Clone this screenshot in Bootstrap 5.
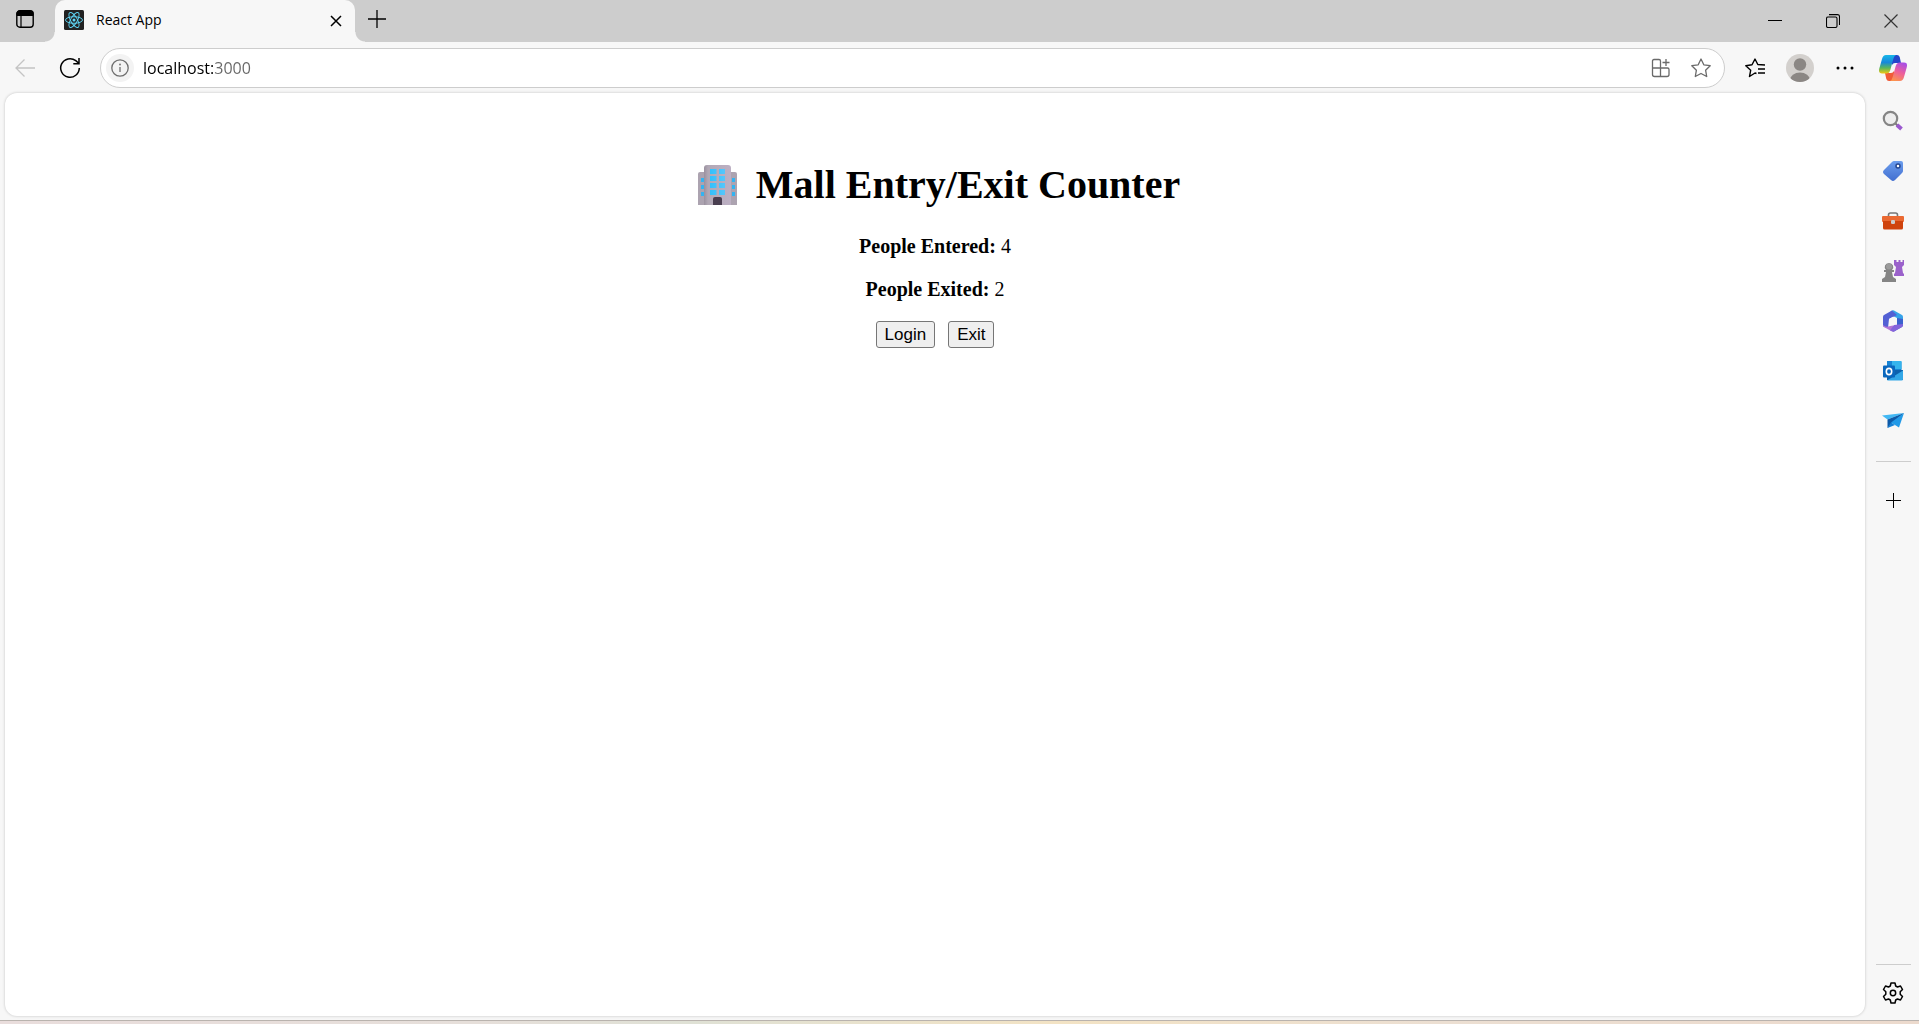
<!DOCTYPE html>
<html lang="en">
<head>
<meta charset="utf-8">
<meta name="viewport" content="width=device-width, initial-scale=1">
<title>React App</title>
<link href="https://cdn.jsdelivr.net/npm/bootstrap@5.3.0/dist/css/bootstrap.min.css" rel="stylesheet">
<style>
  body { background: #f7f7f7; font-family: "Open Sans", "Noto Sans", sans-serif; color: #000; }
  svg { display: block; flex: none; }
  .icon-btn { border: 0; background: none; padding: 0; color: #000; display: flex; align-items: center; justify-content: center; flex: none; }

  .tab-strip { background: #cdcdcd; height: 42px; }
  .tab-actions { width: 50px; }
  .browser-tab { width: 310px; position: relative; padding: 0 5px; }
  .tab-face { background: #f7f7f7; border-radius: 10px 10px 0 0; height: 42px; padding: 0 9px 3px 9px; gap: 12px; font-size: 14px; }
  .browser-tab::before, .browser-tab::after { content: ""; position: absolute; bottom: 0; width: 10px; height: 10px; }
  .browser-tab::before { left: -5px; background: radial-gradient(circle at 0 0, #cdcdcd 9px, #f7f7f7 10px); }
  .browser-tab::after { right: -5px; background: radial-gradient(circle at 100% 0, #cdcdcd 9px, #f7f7f7 10px); }
  .new-tab { width: 34px; }
  .window-btn { width: 58px; height: 42px; padding-left: 2px; }

  .toolbar { height: 51px; gap: 15px; padding: 1px 5px 0 10px; }
  .tool-btn { width: 30px; height: 30px; }
  .address { height: 40px; border: 1px solid #cdcdcd; border-radius: 20px; background: #fff; padding: 0 13px 0 5px; }
  .site-info { width: 28px; height: 28px; border-radius: 50%; background: #f3f3f3; color: #6e6e6e; }
  .address-input { border: 0; outline: 0; padding: 0; margin-left: 9px; min-width: 0; height: 30px; font-size: 16px;
    color: transparent; background: linear-gradient(90deg, #000 71px, #666 71px); -webkit-background-clip: text; background-clip: text; }
  .address-tools { gap: 20px; }
  .address-tools .icon-btn { color: #6a6a6a; width: 20px; }

  .viewport { margin: 0 0 0 5px; background: #fff; border-radius: 12px; box-shadow: 0 0 3px rgba(0,0,0,.22); padding-top: 69px;
    font-family: "Liberation Serif", serif; font-size: 20px; line-height: 23px; }
  .viewport h1 { font-size: 40px; font-weight: 700; line-height: 46px; margin: 0 0 27px; gap: 10px; }
  .viewport p { margin: 0 0 20px; }
  .emoji-box { width: 56px; }
  .counter-btn { font: 17px/23px "Liberation Sans", sans-serif; background: #efefef; border: 1px solid #767676; border-radius: 3px; padding: 1px 8px; color: #000; }
  .counter-row { gap: 13px; }

  .side-rail { width: 54px; padding: 9px 0 10px 2px; }
  .rail-btn { width: 34px; height: 34px; }
  .rail-apps { gap: 16px; }
  .rail-copilot { margin-bottom: 3px; }
  .rail-line { width: 35px; height: 1px; background: #cdcdcd; }
  .rail-line-top { margin: 23px 0 21px; }
  .rail-line-bottom { margin: auto 0 11px; }
  .desk-edge { height: 4px; border-top: 1px solid #b9b3ae; background: linear-gradient(90deg, #e9dddc, #e6dfda 25%, #dfe1d5 36%, #f3e3c4 55%, #ecdfd2 75%, #ecdacd); }
</style>
</head>
<body>
<div class="vh-100 d-flex flex-column overflow-hidden">

  <header class="tab-strip d-flex">
    <button class="icon-btn tab-actions pb-1" aria-label="Tab actions">
      <svg width="18" height="18" viewBox="0 0 18 18" fill="none" stroke="#000"><rect x=".8" y=".8" width="16.4" height="16.4" rx="3" stroke-width="1.4"/><path d="M1 4V3q0-2 2-2h12q2 0 2 2v2.500H1z" fill="#000"/><path d="M5 5v12" stroke-width="1.200"/></svg>
    </button>
    <div class="browser-tab">
      <div class="tab-face d-flex align-items-center">
        <svg width="20" height="20" viewBox="0 0 20 20" fill="none" stroke="#61dafb"><rect width="20" height="20" rx="1.500" fill="#222" stroke="none"/><g stroke-width=".9" transform="translate(10 10)"><ellipse rx="8.500" ry="3.300"/><ellipse rx="8.500" ry="3.300" transform="rotate(60)"/><ellipse rx="8.500" ry="3.300" transform="rotate(120)"/><circle r="1.500" fill="#61dafb" stroke="none"/></g></svg>
        <span class="flex-grow-1">React App</span>
        <button class="icon-btn" aria-label="Close tab"><svg width="20" height="20" viewBox="0 0 20 20" stroke="#000" stroke-width="1.500"><path d="M5 6l10 10M15 6L5 16"/></svg></button>
      </div>
    </div>
    <button class="icon-btn new-tab pb-1" aria-label="New tab"><svg width="18" height="18" viewBox="0 0 18 18" stroke="#000" stroke-width="1.300"><path d="M0 9h18M9 0v18"/></svg></button>
    <div class="d-flex ms-auto">
      <button class="icon-btn window-btn" aria-label="Minimize"><svg width="14" height="14" viewBox="0 0 14 14" stroke="#000"><path d="M0 6.500h14"/></svg></button>
      <button class="icon-btn window-btn" aria-label="Restore"><svg width="14" height="14" viewBox="0 0 14 14" fill="none" stroke="#000" stroke-width="1.100"><rect x=".5" y="3" width="10.500" height="10.500" rx="1.500"/><path d="M3 .6h8.500q2 0 2 2V11"/></svg></button>
      <button class="icon-btn window-btn" aria-label="Close window"><svg width="14" height="14" viewBox="0 0 14 14" stroke="#333" stroke-width="1.200"><path d="M.5 .5l13 13M13.500 .5l-13 13"/></svg></button>
    </div>
  </header>

  <div class="d-flex flex-grow-1">
    <div class="d-flex flex-column flex-grow-1">
      <nav class="toolbar d-flex align-items-center">
        <button class="icon-btn tool-btn" aria-label="Back"><svg width="20" height="20" viewBox="0 0 20 20" fill="none" stroke="#c4c4c4" stroke-width="1.300"><path d="M20 10H1M9.500 1.500L1 10l8.500 8.500"/></svg></button>
        <button class="icon-btn tool-btn" aria-label="Refresh"><svg width="22" height="22" viewBox="0 0 22 22" fill="none" stroke="#000" stroke-width="1.500"><path d="M20.300 11a9.300 9.300 0 1 1-3.500-7.300L20 6.500M20 1v5.700h-5.700"/></svg></button>
        <form class="address d-flex align-items-center flex-grow-1">
          <button type="button" class="icon-btn site-info" aria-label="Site information"><svg width="18" height="18" viewBox="0 0 18 18" fill="none" stroke="currentColor" stroke-width="1.300"><circle cx="9" cy="9" r="8.200"/><path d="M9 8v5"/><circle cx="9" cy="5.500" r=".9" fill="currentColor" stroke="none"/></svg></button>
          <input class="address-input flex-grow-1" type="text" value="localhost:3000" aria-label="Address" spellcheck="false">
          <div class="address-tools d-flex">
            <button type="button" class="icon-btn" aria-label="App available"><svg width="20" height="20" viewBox="0 0 20 20" fill="none" stroke="currentColor" stroke-width="1.300"><path d="M9.500 10H1.500V3q0-1.500 1.500-1.500h5q1.500 0 1.500 1.500zM1.500 10v6.500q0 2 2 2h12.500q2 0 2-2V11.500q0-1.500-1.500-1.500h-7v8.500M15 1v7M11.500 4.500h7"/></svg></button>
            <button type="button" class="icon-btn" aria-label="Add to favorites"><svg width="20" height="20" viewBox="0 0 20 20" fill="none" stroke="currentColor" stroke-width="1.300" stroke-linejoin="round"><path d="M10 1l2.800 5.800 6.400.9-4.600 4.500 1.100 6.300L10 15.500l-5.700 3 1.100-6.300L.8 7.700l6.400-.9z"/></svg></button>
          </div>
        </form>
        <button class="icon-btn tool-btn" aria-label="Favorites"><svg width="20" height="20" viewBox="0 0 20 20" fill="none" stroke="#000" stroke-width="1.400" stroke-linejoin="round"><path d="M11.500 15.500L10 15l-5.500 3.500 1.200-6.300L.8 7.700l6.200-.9L10 1l2.800 5.500L20 7M13 11h7M13 15h7"/></svg></button>
        <button class="icon-btn tool-btn" aria-label="Profile"><svg width="28" height="28" viewBox="0 0 28 28"><clipPath id="face"><circle cx="14" cy="14" r="14"/></clipPath><g clip-path="url(#face)"><path fill="#d3d0cd" d="M0 0h28v28H0z"/><circle cx="14" cy="10.500" r="6.200" fill="#8b8784"/><ellipse cx="14" cy="26" rx="10" ry="7.500" fill="#8b8784"/></g></svg></button>
        <button class="icon-btn tool-btn" aria-label="Settings and more"><svg width="18" height="4" viewBox="0 0 18 4"><circle cx="2" cy="2" r="1.500"/><circle cx="9" cy="2" r="1.500"/><circle cx="16" cy="2" r="1.500"/></svg></button>
      </nav>

      <main class="viewport flex-grow-1 text-center">
        <h1 class="d-flex justify-content-center align-items-center">
          <span class="emoji-box d-flex justify-content-center">
            <svg width="40" height="40" viewBox="0 0 40 40" role="img" aria-label="Office building"><defs><linearGradient id="wall"><stop stop-color="#9a919f"/><stop offset=".15" stop-color="#b1a8b5"/><stop offset="1" stop-color="#bdb0c4"/></linearGradient><linearGradient id="pane"><stop stop-color="#33c0fb"/><stop offset="1" stop-color="#56c6fb"/></linearGradient></defs>
              <path fill="#aca3b0" d="M0 40V9q0-2 2-2h35q2 0 2 2v31z"/><path fill="url(#wall)" d="M6 40V3q0-3 3-3h21q3 0 3 3v37z"/>
              <path fill="url(#pane)" d="M12 4h6.500v5H12zM21 4h6v5h-6zM12 11h6.500v5H12zM21 11h6v5h-6zM12 18h6.500v5H12zM21 18h6v5h-6zM12 25h6.500v5H12zM21 25h6v5h-6z"/>
              <path fill="#34b3f0" d="M3 13h3v4H3zM3 20h3v4H3zM3 27h3v4H3zM34 13h3v4h-3zM34 20h3v4h-3zM34 27h3v4h-3z"/><path fill="#493e50" d="M15 40v-6q0-2 2-2h5q2 0 2 2v6z"/></svg>
          </span>
          <span>Mall Entry/Exit Counter</span>
        </h1>
        <p><strong>People Entered:</strong> 4</p>
        <p><strong>People Exited:</strong> 2</p>
        <div class="counter-row d-flex justify-content-center">
          <button class="counter-btn">Login</button>
          <button class="counter-btn">Exit</button>
        </div>
      </main>
      <div class="pb-1"></div>
    </div>

    <aside class="side-rail d-flex flex-column align-items-center">
      <div class="rail-apps d-flex flex-column align-items-center">
        <button class="icon-btn rail-btn rail-copilot" aria-label="Copilot"><svg width="28" height="26" viewBox="0 0 28 26"><defs><linearGradient id="ca" x1="0" y1="0" x2="0" y2="1"><stop stop-color="#18b7e8"/><stop offset=".4" stop-color="#1688dc"/><stop offset=".7" stop-color="#59b75c"/><stop offset="1" stop-color="#f0c713"/></linearGradient><linearGradient id="cb" x1=".7" y1="0" x2=".3" y2="1"><stop stop-color="#a84fe5"/><stop offset=".5" stop-color="#ed5f9c"/><stop offset="1" stop-color="#fc944d"/></linearGradient></defs>
          <path fill="#2447ca" d="M12 0h6q2 0 2.700 2L22 8h-6q-2 0-3 2z"/><path fill="#f05b38" d="M16 26H10q-2 0-2.700-2L6 18h6q2 0 3-2z"/>
          <path fill="url(#ca)" d="M7 0h10q-2 1-2.700 4l-3 11q-1 3.500-4 3.500H3q-4 0-2.700-5L3 4q1-4 4-4z"/><path fill="url(#cb)" d="M21 26H11q2-1 2.700-4l3-11q1-3.500 4-3.500H25q4 0 2.700 5L25 22q-1 4-4 4z"/></svg></button>
        <button class="icon-btn rail-btn" aria-label="Search"><svg width="22" height="22" viewBox="0 0 22 22" fill="none"><path d="M12.500 12.500l3 3" stroke="#777" stroke-width="2"/><path d="M15 15l4.500 4" stroke="#9b59cf" stroke-width="4"/><circle cx="8.500" cy="8.500" r="6.700" stroke="#858585" stroke-width="2.200" fill="#eee"/></svg></button>
        <button class="icon-btn rail-btn" aria-label="Shopping"><svg width="22" height="22" viewBox="0 0 22 22"><linearGradient id="tg" x1="0" y1="0" x2="0" y2="1"><stop stop-color="#6b9ded"/><stop offset="1" stop-color="#426fd0"/></linearGradient><path fill="url(#tg)" d="M12 1h7q2 0 2 2v8q0 1-1 2l-7 7q-2 2-4 0l-7-6q-2-2 0-4l8-8q1-1 2-1z"/><circle cx="16" cy="6" r="2" fill="#fff" stroke="#264790" stroke-width="1.500"/></svg></button>
        <button class="icon-btn rail-btn" aria-label="Tools"><svg width="22" height="18" viewBox="0 0 22 18"><path d="M6.500 5V3q0-2 2-2h5q2 0 2 2v2" fill="none" stroke="#777" stroke-width="1.600"/><rect y="4" width="22" height="6" rx="1" fill="#ea6932"/><path fill="#cf430d" d="M1 9h20v7q0 1.500-1.500 1.500h-17Q1 17.500 1 16z"/><rect x="9" y="8" width="4" height="4" rx="1.300" fill="#ccc"/></svg></button>
        <button class="icon-btn rail-btn" aria-label="Games"><svg width="22" height="24" viewBox="0 0 22 24"><path fill="#9b62cb" d="M12 1h2.500v2h2V1h2v2h2V1H22v5l-2 2 1 6 1 1v2H12v-2l1-1 1-6-2-2z"/><path fill="#858585" d="M2 11h2q-2-2-1-4.500Q4 4 7 4t4 2.500Q12 9 10 11h2v2h-2l1 5 3 2v3H0v-3l3-2 1-5H2z"/><circle cx="7" cy="7.500" r="3" fill="#9b9b9b"/></svg></button>
        <button class="icon-btn rail-btn" aria-label="Microsoft 365"><svg width="22" height="22" viewBox="0 0 22 22"><path fill="#37a3e9" d="M10 .5q1-.5 2 0l8 4.500q1 .5 1 2v9l-6-3V8l-4-2-4-3z"/><path fill="#5360d4" d="M10 .5L2 5Q1 5.500 1 7v8q0 1.500 1 2l4 1 1-9 8-4z"/><path fill="#b274d7" d="M1 15q0 1.500 1 2l8 4.500q1 .5 2 0l5-4-6-2-5 1q-2 1-5-1.500z"/><path fill="#3a62ce" d="M21 9v6q0 1.500-1 2l-8 4.500-2-.5 5-5V8z"/><path fill="#8464db" d="M12 15l9-1q0 2-1 3l-8 4.500-4-1z"/><path fill="#f7f7f7" d="M11 6.800l4 2.100v4.300l-4 2.100-4-2.100V8.900z"/></svg></button>
        <button class="icon-btn rail-btn" aria-label="Outlook"><svg width="20" height="20" viewBox="0 0 20 20"><path fill="#1784d5" d="M4 0h13q1.500 0 1.500 1.500V13H4z"/><path fill="#35b4ed" d="M9 0h9.500v8H9z"/><path fill="#0c61ad" d="M4 9h16v10H4z"/><path fill="#32a7e7" d="M4 19.500L20 9.500V18q0 1.500-1.500 1.500z"/><rect y="4.500" width="12" height="12" rx="1" fill="#0a67bd"/><ellipse cx="6" cy="10.500" rx="2.700" ry="3.100" fill="none" stroke="#fff" stroke-width="1.600"/></svg></button>
        <button class="icon-btn rail-btn" aria-label="Drop"><svg width="22" height="16" viewBox="0 0 22 16"><path fill="#42b8f4" d="M22 0L0 2.500l5.500 4z"/><path fill="#0c59a7" d="M22 0L5.500 6.500V15l4-4z"/><path fill="#1680d5" d="M5.500 15L9 9.500l4 2.500z"/><path fill="#2199e7" d="M22 0L9 9.500l8 5z"/></svg></button>
      </div>
      <div class="rail-line rail-line-top"></div>
      <button class="icon-btn rail-btn" aria-label="Customize"><svg width="15" height="15" viewBox="0 0 15 15" stroke="#000"><path d="M0 7.500h15M7.500 0v15"/></svg></button>
      <div class="rail-line rail-line-bottom"></div>
      <button class="icon-btn rail-btn" aria-label="Settings"><svg width="22" height="22" viewBox="0 0 22 22" fill="none" stroke="#000" stroke-width="1.500" stroke-linejoin="round"><path d="M9 1h4l.7 3 1.800 1 3-1 2 3.500-2.300 2.200v2.600l2.300 2.200-2 3.500-3-1-1.800 1-.7 3H9l-.7-3-1.800-1-3 1-2-3.500 2.300-2.200V9.700L1.500 7.500l2-3.500 3 1 1.800-1z"/><circle cx="11" cy="11" r="2.700"/></svg></button>
    </aside>
  </div>
  <div class="desk-edge"></div>
</div>
<script src="https://cdn.jsdelivr.net/npm/bootstrap@5.3.0/dist/js/bootstrap.bundle.min.js"></script>
</body>
</html>
